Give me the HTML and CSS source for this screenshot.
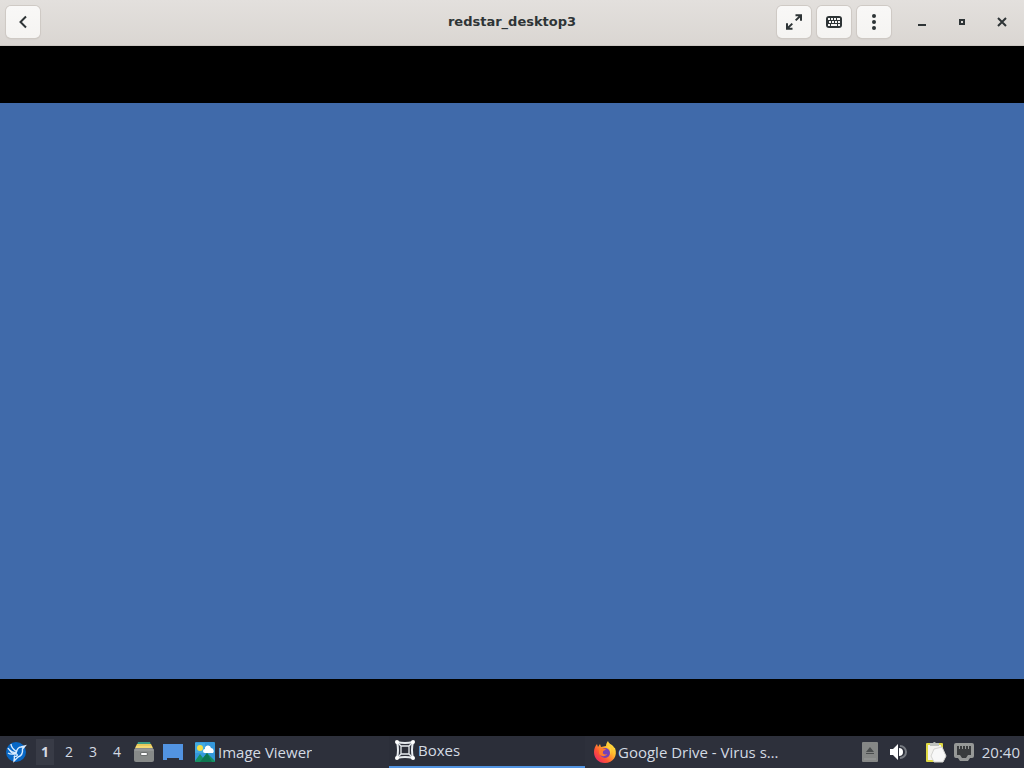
FILE: index.html
```
<!DOCTYPE html>
<html lang="en">

<head>
    <meta charset="UTF-8">
    <meta name="viewport" content="width=device-width, initial-scale=1.0">
    <title>redstar_desktop3</title>
    <link rel="stylesheet" href="styles.css">
</head>

<body>
    <header class="titlebar">
        <div class="titlebar-start">
            <button class="tool-button" aria-label="Back">
                <svg width="16" height="16" viewBox="0 0 16 16"><path d="M11 2.5 L5.5 8 L11 13.5" fill="none" stroke="#2e3436" stroke-width="2"/></svg>
            </button>
        </div>
        <h1>redstar_desktop3</h1>
        <div class="titlebar-end">
            <button class="tool-button" aria-label="Fullscreen">
                <svg width="16" height="16" viewBox="0 0 16 16">
                    <path d="M9.5 1.2 H15 V6.8 M15 1.2 L9.7 6.4 M1 9.2 V14.8 H6.5 M1 14.8 L6.3 9.6" fill="none" stroke="#2e3436" stroke-width="2"/>
                </svg>
            </button>
            <button class="tool-button" aria-label="Keyboard">
                <svg width="16" height="16" viewBox="0 0 16 16">
                    <rect x="0" y="2" width="16" height="12" rx="3" fill="#2e3436"/>
                    <path d="M2 4h2v2H2z M5 4h2v2H5z M8 4h2v2H8z M11 4h3v2h-3z M3 7h2v2H3z M6 7h2v2H6z M9 7h2v2H9z M12 7h2v2h-2z M2 10h2v2H2z M5 10h6v2H5z M12 10h2v2h-2z" fill="#f6f5f4"/>
                </svg>
            </button>
            <button class="tool-button" aria-label="Menu">
                <svg width="16" height="16" viewBox="0 0 16 16" fill="#2e3436"><circle cx="8" cy="2" r="2"/><circle cx="8" cy="8" r="2"/><circle cx="8" cy="14" r="2"/></svg>
            </button>
            <div class="window-controls">
                <button aria-label="Minimize">
                    <svg width="16" height="16" viewBox="0 0 16 16"><path d="M4 10h8v2H4z" fill="#2e3436"/></svg>
                </button>
                <button aria-label="Maximize">
                    <svg width="16" height="16" viewBox="0 0 16 16"><path d="M6 6h4v4H6z" fill="none" stroke="#2e3436" stroke-width="2"/></svg>
                </button>
                <button aria-label="Close">
                    <svg width="16" height="16" viewBox="0 0 16 16"><path d="M4 4 L12 12 M12 4 L4 12" stroke="#2e3436" stroke-width="2"/></svg>
                </button>
            </div>
        </div>
    </header>

    <main class="display">
        <div class="guest-screen"></div>
    </main>

    <footer class="taskbar">
        <button class="launcher" aria-label="Applications">
            <svg width="20" height="20" viewBox="0 0 20 20">
                <circle cx="10" cy="10" r="10" fill="#0868c6"/>
                <path d="M2 6 C4 10 7 10 10 11 M5 2 C5 6 8 8 11 10 M2 11 C5 13 8 12 10 11" fill="none" stroke="#d9ecff" stroke-width="1.4"/>
                <path d="M10 11 C11 7 12 5 15 5 L19 4 L16.5 7 C17 12 15 14 12 15 L8 19 C8 17 9 15 8 14" fill="none" stroke="#d9ecff" stroke-width="1.4"/>
                <path d="M4 8 C5 11 8 12 11 12 M11 12 C12 14 10 15 8 14" fill="none" stroke="#d9ecff" stroke-width="1.4"/>
            </svg>
        </button>
        <nav class="workspaces" aria-label="Workspaces">
            <button class="current">1</button>
            <button>2</button>
            <button>3</button>
            <button>4</button>
        </nav>
        <div class="quick-launch">
            <button aria-label="Files">
                <svg width="20" height="20" viewBox="0 0 20 20">
                    <path d="M4 0h12l1 3H3z" fill="#3a9a84"/>
                    <path d="M3 2h14l2 4H1z" fill="#e8c95c"/>
                    <path d="M2 4h16v3H2z" fill="#f4da72"/>
                    <path d="M1 6h18l1 3v9a2 2 0 0 1-2 2H2a2 2 0 0 1-2-2V9z" fill="#878a89"/>
                    <path d="M0 8h20" stroke="#a2a4a3"/>
                    <rect x="6" y="10" width="8" height="4" rx="2" fill="#6c706f"/>
                    <rect x="7" y="11" width="6" height="2" rx="1" fill="#fff"/>
                </svg>
            </button>
            <button aria-label="Show desktop">
                <svg width="20" height="20" viewBox="0 0 20 20"><path d="M0 2h20v16h-4v-2H4v2H0z" fill="#5294e2"/></svg>
            </button>
        </div>
        <div class="tasks">
            <button class="task">
                <svg width="20" height="20" viewBox="0 0 20 20">
                    <rect width="20" height="20" rx="1" fill="#3498db"/>
                    <path d="M0 1h10v10H0z" fill="#43a9df"/>
                    <circle cx="5" cy="6" r="3" fill="#f4de45"/>
                    <path d="M10 11a2 2 0 0 1 0-4a3 3 0 0 1 6-1a3 3 0 0 1 2 5z" fill="#fff"/>
                    <path d="M0 19 L5 12 L8 16 L12 11 L20 19 V20 H0z" fill="#168f63"/>
                    <path d="M5 20 L12 11 L17 20z" fill="#0d7650"/>
                </svg>
                <span>Image Viewer</span>
            </button>
            <button class="task active">
                <svg width="20" height="20" viewBox="0 0 20 20">
                    <path d="M2 2 Q10 4 18 2 Q16 10 18 18 Q10 16 2 18 Q4 10 2 2z" fill="none" stroke="#e7ebef" stroke-width="2"/>
                    <path d="M6 6h8v8H6z M2 2l4 4 M18 2l-4 4 M2 18l4-4 M18 18l-4-4" fill="none" stroke="#e7ebef" stroke-width="1.3"/>
                    <g fill="#fff"><circle cx="2" cy="2" r="2"/><circle cx="18" cy="2" r="2"/><circle cx="2" cy="18" r="2"/><circle cx="18" cy="18" r="2"/></g>
                </svg>
                <span>Boxes</span>
            </button>
            <button class="task">
                <svg width="20" height="20" viewBox="1 1 20 20">
                    <defs>
                        <linearGradient id="flame" x1="1" y1="0" x2="0" y2="1">
                            <stop offset="0" stop-color="#fff44f"/>
                            <stop offset="0.35" stop-color="#ffbd2e"/>
                            <stop offset="0.65" stop-color="#ff5634"/>
                            <stop offset="1" stop-color="#e51578"/>
                        </linearGradient>
                    </defs>
                    <path d="M14 0 C15 3 17 3 19 5 C20 6 20 7 21 7 C24 15 19 22 11 22 C4 22 0 17 0 11 C0 8 1 5 3 3 L4 6 L6 3 L7 6 L12 5 C12 3 13 1 14 0 Z" fill="url(#flame)"/>
                    <circle cx="11" cy="12" r="5" fill="#7542b8"/>
                    <path d="M5 8 C7 6 9 8 12 8 C11 10 9 9 9 11 C8 13 11 14 13 13 C12 16 6 16 5 12z" fill="#ff7a2c"/>
                    <path d="M12 6 C16 6 17 10 16 14 C18 11 18 7 15 5z" fill="#ffd33e"/>
                </svg>
                <span>Google Drive - Virus s…</span>
            </button>
        </div>
        <div class="tray">
            <button aria-label="Removable media">
                <svg width="16" height="20" viewBox="0 0 16 20">
                    <rect width="16" height="20" rx="1" fill="#858786"/>
                    <path d="M8 5l4 5H4z M4 11h8v1H4z" fill="#4a4d4e"/>
                    <path d="M2 17h12" stroke="#999b9a"/>
                </svg>
            </button>
            <button class="volume" aria-label="Volume">
                <svg width="16" height="16" viewBox="0 0 16 16">
                    <path d="M0 5h3l5-5v16l-5-5H0z" fill="#fff"/>
                    <path d="M9 4a4 4 0 0 1 0 8z" fill="#fff"/>
                    <path d="M10 2a6 6 0 0 1 0 12" fill="none" stroke="#777b82" stroke-width="2"/>
                </svg>
            </button>
            <button aria-label="Clipboard">
                <svg width="20" height="20" viewBox="0 0 20 20">
                    <rect x="0" y="1" width="17" height="19" rx="1" fill="#dfd943"/>
                    <path d="M2 3h13v15H2z" fill="#f4f3ef"/>
                    <path d="M4 1h3q1-2 3 0h3v3H4z" fill="#bfc2be"/>
                    <path d="M8 7l8-2 4 9-3 6H8l-3-6z" fill="#f8f8f8" stroke="#d5d5d2"/>
                </svg>
            </button>
            <button aria-label="Network">
                <svg width="20" height="18" viewBox="0 0 20 18">
                    <path d="M2 0h16a2 2 0 0 1 2 2v11a2 2 0 0 1-2 2h-2l-2 3H6l-2-3H2a2 2 0 0 1-2-2V2a2 2 0 0 1 2-2z" fill="#969897"/>
                    <path d="M3 3h14v9h-3l-2 3H8l-2-3H3z" fill="#393b3d"/>
                    <path d="M5.5 3v3 M8.5 3v3 M11.5 3v3 M14.5 3v3" stroke="#969897"/>
                </svg>
            </button>
            <time datetime="20:40">20:40</time>
        </div>
    </footer>
</body>

</html>
```
FILE: styles.css
```
* {
    box-sizing: border-box;
}

body {
    display: flex;
    flex-direction: column;
    min-height: 100vh;
    margin: 0;
    background-color: #000;
    font-family: "Open Sans", "Noto Sans", sans-serif;
}

button {
    display: flex;
    align-items: center;
    justify-content: center;
    padding: 0;
    border: none;
    background: none;
    color: inherit;
    font: inherit;
}

svg {
    flex-shrink: 0;
    overflow: visible;
}

/* title bar */
.titlebar {
    display: grid;
    grid-template-columns: 1fr auto 1fr;
    align-items: center;
    height: 46px;
    padding: 0 6px 2px;
    border-bottom: 1px solid #cbc7c2;
    background: linear-gradient(to bottom, #e3e0dd, #dad6d2);
}

.titlebar h1 {
    margin: 0;
    color: #2e3436;
    font: bold 13px/20px "DejaVu Sans", sans-serif;
}

.titlebar-end {
    display: flex;
    justify-content: flex-end;
    gap: 6px;
}

.tool-button {
    width: 34px;
    height: 32px;
    border-radius: 5px;
    background: linear-gradient(to bottom, #f9f8f7, #f5f4f2);
    box-shadow: 0 0 0 1px #cfcac5, 0 1px 2px rgba(0, 0, 0, 0.1);
}

.window-controls {
    display: flex;
    gap: 16px;
    margin-left: 13px;
    padding-right: 4px;
}

.window-controls button {
    width: 24px;
}

/* virtual machine display */
.display {
    display: flex;
    flex: 1;
    align-items: center;
}

.guest-screen {
    width: 100%;
    aspect-ratio: 16 / 9;
    background-color: #406aaa;
}

/* bottom panel */
.taskbar {
    display: flex;
    align-items: center;
    height: 32px;
    padding: 0 4px 0 6px;
    background-color: #2d303b;
    color: #d3dae3;
    font-size: 15px;
    line-height: 20px;
}

.workspaces {
    display: flex;
    gap: 6px;
    margin-left: 10px;
}

.workspaces button {
    width: 18px;
    height: 26px;
    font-size: 14px;
}

.workspaces .current {
    background-color: #383b46;
    font-weight: bold;
}

.quick-launch {
    display: flex;
    gap: 9px;
    margin-left: 8px;
}

.tasks {
    display: flex;
    flex: 1;
    gap: 4px;
    max-width: 596px;
    min-width: 0;
    margin-left: 6px;
}

.task {
    flex: 1;
    justify-content: flex-start;
    gap: 3px;
    min-width: 0;
    height: 32px;
    padding: 0 6px;
}

.task.active {
    padding-bottom: 2px;
    border-bottom: 2px solid #5294e2;
    background-color: #2b2e39;
}

.task span {
    overflow: hidden;
    text-overflow: ellipsis;
    white-space: nowrap;
}

.tray {
    display: flex;
    align-items: center;
    gap: 8px;
    margin-left: auto;
}

.volume {
    margin: 0 12px 0 4px;
}
```
